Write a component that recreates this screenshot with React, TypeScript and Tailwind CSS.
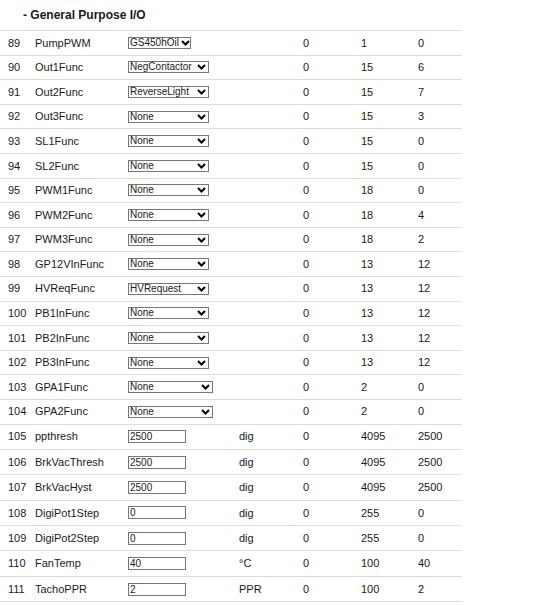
import React from 'react';

type Row = {
    id: number;
    name: string;
    kind: 'select' | 'input';
    value: string;
    selWidth?: string;
    unit?: string;
    min: string;
    max: string;
    def: string;
};

const rows: Row[] = [
    { id: 89, name: 'PumpPWM', kind: 'select', value: 'GS450hOil', selWidth: 'w-[63px]', min: '0', max: '1', def: '0' },
    { id: 90, name: 'Out1Func', kind: 'select', value: 'NegContactor', min: '0', max: '15', def: '6' },
    { id: 91, name: 'Out2Func', kind: 'select', value: 'ReverseLight', min: '0', max: '15', def: '7' },
    { id: 92, name: 'Out3Func', kind: 'select', value: 'None', min: '0', max: '15', def: '3' },
    { id: 93, name: 'SL1Func', kind: 'select', value: 'None', min: '0', max: '15', def: '0' },
    { id: 94, name: 'SL2Func', kind: 'select', value: 'None', min: '0', max: '15', def: '0' },
    { id: 95, name: 'PWM1Func', kind: 'select', value: 'None', min: '0', max: '18', def: '0' },
    { id: 96, name: 'PWM2Func', kind: 'select', value: 'None', min: '0', max: '18', def: '4' },
    { id: 97, name: 'PWM3Func', kind: 'select', value: 'None', min: '0', max: '18', def: '2' },
    { id: 98, name: 'GP12VInFunc', kind: 'select', value: 'None', min: '0', max: '13', def: '12' },
    { id: 99, name: 'HVReqFunc', kind: 'select', value: 'HVRequest', min: '0', max: '13', def: '12' },
    { id: 100, name: 'PB1InFunc', kind: 'select', value: 'None', min: '0', max: '13', def: '12' },
    { id: 101, name: 'PB2InFunc', kind: 'select', value: 'None', min: '0', max: '13', def: '12' },
    { id: 102, name: 'PB3InFunc', kind: 'select', value: 'None', min: '0', max: '13', def: '12' },
    { id: 103, name: 'GPA1Func', kind: 'select', value: 'None', selWidth: 'w-[85px]', min: '0', max: '2', def: '0' },
    { id: 104, name: 'GPA2Func', kind: 'select', value: 'None', selWidth: 'w-[85px]', min: '0', max: '2', def: '0' },
    { id: 105, name: 'ppthresh', kind: 'input', value: '2500', unit: 'dig', min: '0', max: '4095', def: '2500' },
    { id: 106, name: 'BrkVacThresh', kind: 'input', value: '2500', unit: 'dig', min: '0', max: '4095', def: '2500' },
    { id: 107, name: 'BrkVacHyst', kind: 'input', value: '2500', unit: 'dig', min: '0', max: '4095', def: '2500' },
    { id: 108, name: 'DigiPot1Step', kind: 'input', value: '0', unit: 'dig', min: '0', max: '255', def: '0' },
    { id: 109, name: 'DigiPot2Step', kind: 'input', value: '0', unit: 'dig', min: '0', max: '255', def: '0' },
    { id: 110, name: 'FanTemp', kind: 'input', value: '40', unit: '°C', min: '0', max: '100', def: '40' },
    { id: 111, name: 'TachoPPR', kind: 'input', value: '2', unit: 'PPR', min: '0', max: '100', def: '2' },
];

const Chevron: React.FC = () => (
    <svg width="9" height="6" viewBox="0 0 9 6" className="shrink-0">
        <path d="M1 1 L4.5 4.5 L8 1" fill="none" stroke="#000" strokeWidth="2" />
    </svg>
);

const FakeSelect: React.FC<{ value: string; width?: string }> = ({ value, width }) => (
    <div className={`${width || 'w-[81px]'} h-[12px] border border-[#767676] bg-white flex items-center justify-between gap-[2px] pl-[1px] pr-[2px] text-[10px] leading-none`}>
        <span className="whitespace-nowrap">{value}</span>
        <Chevron />
    </div>
);

export default function App() {
    return (
        <div className="bg-white min-h-[605px] text-[11px] text-[#1a1a1a]" style={{ fontFamily: '"Liberation Sans", Arial, sans-serif' }}>
            <div className="h-[30px] flex items-center pl-[23px] font-bold text-[12px]">- General Purpose I/O</div>
            <table className="w-[462px] border-collapse table-fixed">
                <colgroup>
                    <col className="w-[27px]" />
                    <col className="w-[93px]" />
                    <col className="w-[111px]" />
                    <col className="w-[64px]" />
                    <col className="w-[58px]" />
                    <col className="w-[57px]" />
                    <col className="w-[52px]" />
                </colgroup>
                <tbody>
                    {rows.map((r) => (
                        <tr key={r.id} className={`border-t border-[#dddddd] ${r.kind === 'select' ? 'h-[24.6px]' : 'h-[25.4px]'} ${r.id === 111 ? 'border-b' : ''}`}>
                            <td className="pl-[8px] p-0 whitespace-nowrap">{r.id}</td>
                            <td className="pl-[8px] p-0 whitespace-nowrap">{r.name}</td>
                            <td className="pl-[8px] p-0">
                                {r.kind === 'select' ? (
                                    <FakeSelect value={r.value} width={r.selWidth} />
                                ) : (
                                    <div className="w-[58px] h-[13px] border border-[#767676] bg-white pl-[1px] text-[10px] leading-[11px]">{r.value}</div>
                                )}
                            </td>
                            <td className="pl-[8px] p-0">{r.unit || ''}</td>
                            <td className="pl-[8px] p-0">{r.min}</td>
                            <td className="pl-[8px] p-0">{r.max}</td>
                            <td className="pl-[8px] p-0">{r.def}</td>
                        </tr>
                    ))}
                </tbody>
            </table>
        </div>
    );
}
